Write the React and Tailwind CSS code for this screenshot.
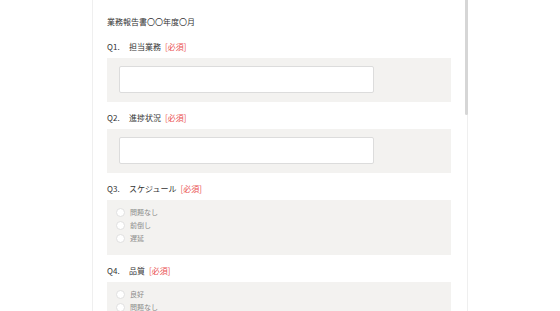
import React from 'react';

const questions = [
    { no: 'Q1.', title: '担当業務', type: 'text' },
    { no: 'Q2.', title: '進捗状況', type: 'text' },
    { no: 'Q3.', title: 'スケジュール', type: 'radio', options: ['問題なし', '前倒し', '遅延'] },
    { no: 'Q4.', title: '品質', type: 'radio', options: ['良好', '問題なし', '要改善'] },
];

const Question = ({ q, first }) => (
    <div className={first ? '' : 'mt-[10px]'}>
        <div className="flex items-center h-[12px] text-[8px] leading-[12px] text-[#333] mb-[5px]">
            <span className="w-[22px]">{q.no}</span>
            <span>{q.title}</span>
            <span className="ml-[4px] text-[#ea4f4f]">[必須]</span>
        </div>
        {q.type === 'text' ? (
            <div className="bg-[#f3f2f0] h-[44px] pt-[8px] pl-[12px]">
                <div className="w-[255px] h-[27px] bg-white border border-[#dcdcdc] rounded-[2px]" />
            </div>
        ) : (
            <div className="bg-[#f3f2f0] h-[55px] pt-[6px] pl-[9px]">
                {q.options.map((opt) => (
                    <label key={opt} className="flex items-center h-[13px] gap-[5px]">
                        <span className="w-[9px] h-[9px] rounded-full bg-white border border-[#e0e0e0]" />
                        <span className="text-[7px] text-[#8a8a8a]">{opt}</span>
                    </label>
                ))}
            </div>
        )}
    </div>
);

export default function App() {
    return (
        <div
            className="h-[311px] overflow-hidden bg-white"
            style={{ fontFamily: '"Noto Sans CJK JP", "Noto Sans", sans-serif' }}
        >
            <div className="relative mx-auto w-[376px] h-full border-x border-[#efefef] pl-[14px] pr-[16px] pt-[16px]">
                <div className="text-[8px] leading-[12px] text-[#333] mb-[13px]">業務報告書〇〇年度〇月</div>
                {questions.map((q, i) => (
                    <Question key={q.no} q={q} first={i === 0} />
                ))}
                <div className="absolute right-[-1px] top-0 w-[3px] h-[115px] rounded-b-full bg-[#d6d6d6]" />
            </div>
        </div>
    );
}
